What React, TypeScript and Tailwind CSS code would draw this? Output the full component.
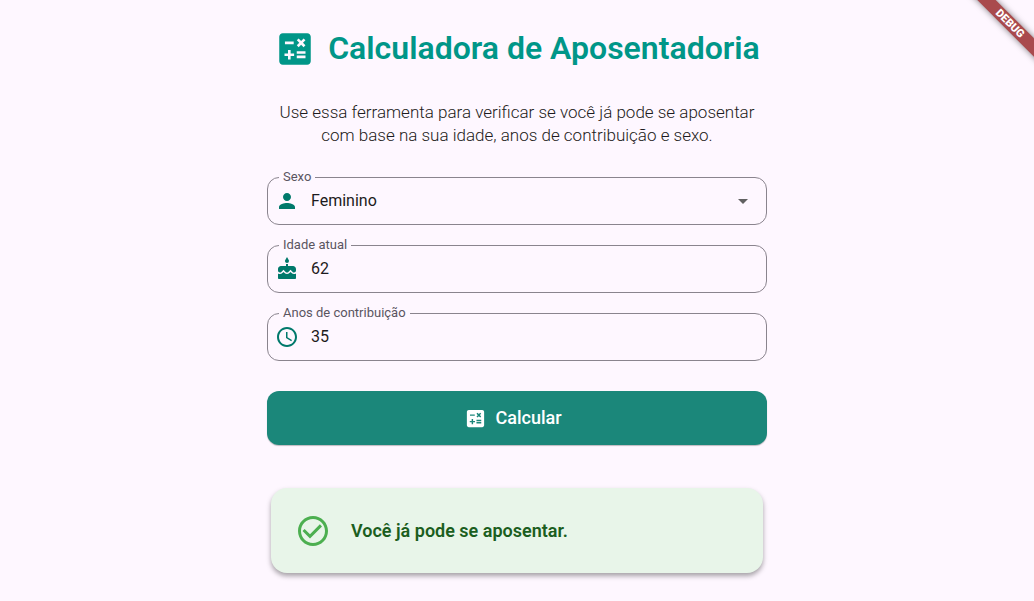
import { useState } from "react";
import type { ReactNode } from "react";
import {
  MdAccessTime,
  MdArrowDropDown,
  MdCake,
  MdCalculate,
  MdCheckCircleOutline,
  MdPerson,
} from "react-icons/md";

type FieldProps = {
  id: string;
  label: string;
  icon: ReactNode;
  children: ReactNode;
};

function Field({ id, label, icon, children }: FieldProps) {
  return (
    <fieldset className="min-w-0 rounded-xl border border-[#8a848e]">
      <legend className="ml-[11px] px-1 text-[13px] leading-[14px] text-[#5a555f]">
        <label htmlFor={id}>{label}</label>
      </legend>
      <div className="flex h-10 items-center gap-3 pr-[11px] pb-1.5 pl-[7px]">
        <span className="text-2xl text-[#00796b]">{icon}</span>
        {children}
      </div>
    </fieldset>
  );
}

const controlClass =
  "h-6 min-w-0 flex-1 appearance-none bg-transparent pb-px text-base leading-[23px] text-[#1d1b20] outline-none";

export default function App() {
  const [sex, setSex] = useState("Feminino");
  const [age, setAge] = useState("62");
  const [years, setYears] = useState("35");
  const [eligible, setEligible] = useState(true);

  function calculate() {
    const female = sex === "Feminino";
    setEligible(
      Number(age) >= (female ? 62 : 65) && Number(years) >= (female ? 30 : 35),
    );
  }

  return (
    <div className="relative min-h-screen overflow-hidden bg-[#fef7ff] font-['Roboto',sans-serif]">
      <main className="mx-auto flex w-full max-w-[500px] flex-col pt-6 pb-7">
        <h1 className="flex items-center justify-center gap-3 text-[32px] leading-[49px] font-semibold whitespace-nowrap text-[#009688]">
          <MdCalculate className="size-[42px] shrink-0" />
          Calculadora de Aposentadoria
        </h1>

        <p className="mt-7 text-center text-[17px] leading-[23px] font-light text-[#1d1b20]">
          Use essa ferramenta para verificar se você já pode se aposentar
          <br />
          com base na sua idade, anos de contribuição e sexo.
        </p>

        <div className="mt-[23px] flex flex-col gap-[13px]">
          <Field id="sexo" label="Sexo" icon={<MdPerson />}>
            <select
              id="sexo"
              value={sex}
              onChange={(e) => setSex(e.target.value)}
              className={controlClass}
            >
              <option>Feminino</option>
              <option>Masculino</option>
            </select>
            <MdArrowDropDown className="pointer-events-none size-6 text-[#616161]" />
          </Field>
          <Field id="idade" label="Idade atual" icon={<MdCake />}>
            <input
              id="idade"
              inputMode="numeric"
              value={age}
              onChange={(e) => setAge(e.target.value)}
              className={controlClass}
            />
          </Field>
          <Field id="anos" label="Anos de contribuição" icon={<MdAccessTime />}>
            <input
              id="anos"
              inputMode="numeric"
              value={years}
              onChange={(e) => setYears(e.target.value)}
              className={controlClass}
            />
          </Field>
        </div>

        <button
          type="button"
          onClick={calculate}
          className="mt-[30px] flex h-[54px] items-center justify-center gap-2 rounded-xl bg-[#1b877a] pr-2 text-lg font-medium text-white shadow-[0_1px_1px_rgba(0,0,0,0.25)]"
        >
          <MdCalculate className="size-[23px]" />
          Calcular
        </button>

        <div
          role="status"
          className="mx-1 mt-[43px] flex items-center gap-5 rounded-2xl bg-[#e8f5e9] p-6 text-lg leading-[37px] font-semibold text-[#1b5e20] shadow-[0_3px_5px_rgba(0,0,0,0.35)]"
        >
          <MdCheckCircleOutline className="size-9 text-[#4caf50]" />
          {eligible
            ? "Você já pode se aposentar."
            : "Você ainda não pode se aposentar."}
        </div>
      </main>

      <div className="absolute top-[17px] -right-[36px] w-[120px] rotate-45 bg-[#a94a4d] text-center text-[11px] leading-[13px] font-black text-white shadow-[0_0_6px_rgba(0,0,0,0.5)]">
        DEBUG
      </div>
    </div>
  );
}
